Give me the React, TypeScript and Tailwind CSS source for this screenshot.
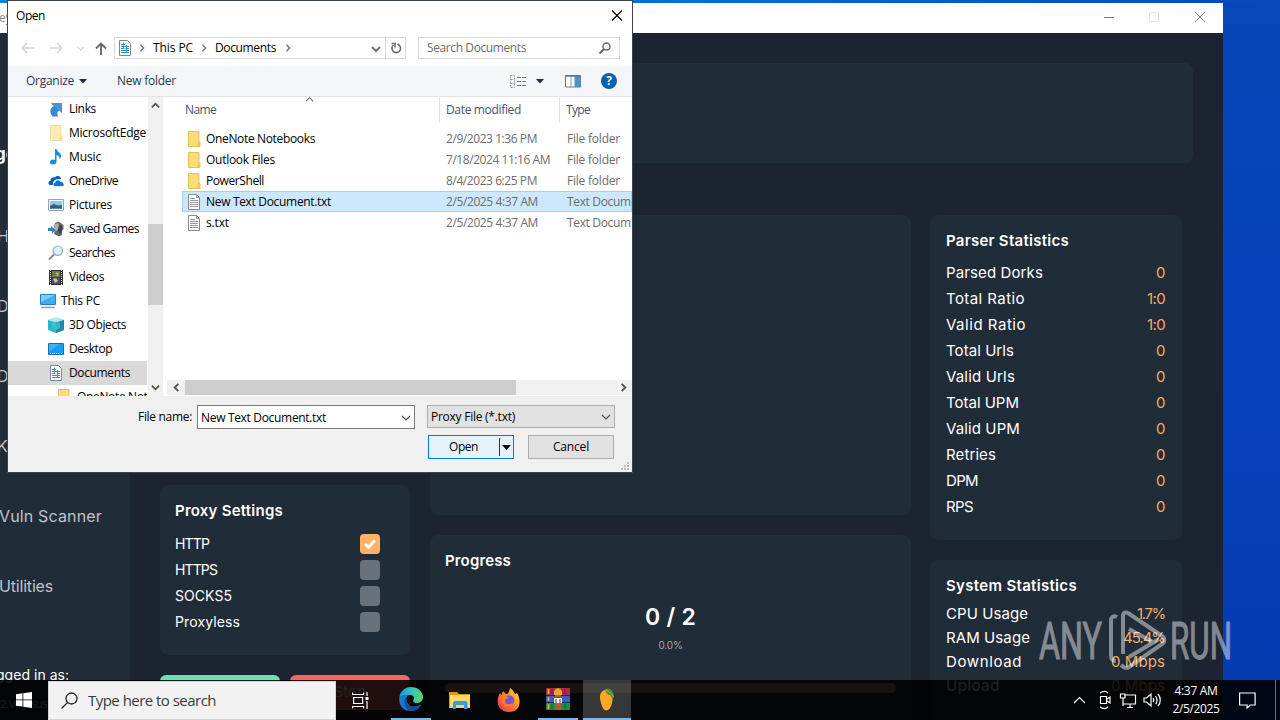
import React from "react";

const POP = "font-[Inter,'Liberation_Sans',sans-serif]";
const UI = "font-['Open_Sans','Noto_Sans',sans-serif]";

type TProps = { w: number; children: string; className?: string };

/* A line of text stretched to an exact advance width. */
function T({ w, children, className = "" }: TProps) {
  const ref = React.useRef<HTMLSpanElement>(null);
  React.useLayoutEffect(() => {
    const el = ref.current;
    if (!el) return;
    el.style.letterSpacing = "0px";
    const natural = el.getBoundingClientRect().width;
    el.style.letterSpacing = (w - natural) / children.length + "px";
  }, [w, children]);
  return (
    <span ref={ref} className={"inline-block shrink-0 whitespace-pre " + className}>
      {children}
    </span>
  );
}

function Folder({ pale = false }: { pale?: boolean }) {
  return (
    <svg width="16" height="18" viewBox="0 0 16 18" className="shrink-0">
      <path d="M2.500 1.500h10.500v10l1 .5v4.500H2.500z" fill={pale ? "#fbecb0" : "#fbdc77"} stroke={pale ? "#f0dfa0" : "#e8c353"} strokeWidth="1" />
      <path d="M12 11.500l2-.5v5.500h-3z" fill={pale ? "#f5e09a" : "#f0c850"} />
    </svg>
  );
}

function TextFile() {
  return (
    <svg width="16" height="18" viewBox="0 0 16 18" className="shrink-0">
      <path d="M2.500 1.500h8l3 3v12h-11z" fill="#fff" stroke="#8a8a8a" />
      <path d="M10.500 1.500v3h3" fill="none" stroke="#8a8a8a" />
      <path d="M4 5.500h5M4 7.500h8M4 9.500h8M4 11.500h8M4 13.500h8" stroke="#9a9a9a" />
    </svg>
  );
}

function DocIcon() {
  return (
    <svg width="16" height="18" viewBox="0 0 16 18" className="shrink-0">
      <path d="M2.500 1.500h8l3 3v12h-11z" fill="#fff" stroke="#7c8790" />
      <path d="M4 5.500h4M4 7.500h8M4 9.500h3.500M8.500 9.500H12M4 11.500h8M4 13.500h8" stroke="#2b8fd0" strokeWidth="1.200" />
      <path d="M6.500 3.500v6M9.500 6v7" stroke="#3f9bd5" />
    </svg>
  );
}

function TreeIcon({ name }: { name: string }) {
  switch (name) {
    case "Links":
      return (
        <svg width="16" height="16" viewBox="0 0 16 16"><path d="M3 2h11v10l-2.500-2.500C9 10.500 9 12 10 15.500H4.500C1 11 2 7 6 5z" fill="#3b86d0" /><path d="M14 2v10L6 5 3 2z" fill="#5aa2e2" opacity=".5" /></svg>
      );
    case "Music":
      return (
        <svg width="16" height="16" viewBox="0 0 16 16"><path d="M7 0h1.500c.3 3 4.500 3.500 4.500 7 0 1.500-.7 2.500-1.500 3.500.5-3-1-3.700-3-4.500v6.500c0 2-1.700 3-3.500 3S2 14.500 2 13.200 3.500 10.500 5 10.500c.8 0 1.500.2 2 .5z" fill="#158ade" /></svg>
      );
    case "OneDrive":
      return (
        <svg width="16" height="16" viewBox="0 0 16 16"><path d="M3 12C0 12-.5 8.500 2.500 7.800 2.500 5 5 3.500 7 4.500 9 1.800 13 3 13 6l-5 .5C5.500 7 5 10 5 12z" fill="#0b5cb8" /><path d="M7 13.500c-2.500-.3-2.500-3.700 0-4 .3-3 4.500-3.500 5.500-1 2-.2 3 1 2.800 2 1.300.7.900 3-.8 3z" fill="#0f74d3" stroke="#fff" strokeWidth=".7" /></svg>
      );
    case "Pictures":
      return (
        <svg width="16" height="16" viewBox="0 0 16 16"><path d="M.5 2.500h15v11H.500z" fill="#f4f8fb" stroke="#9aa4ac" /><path d="M2 4h12v8H2z" fill="#8fc8f2" /><path d="M2 9l4-2 4 1.500 4-.5v4H2z" fill="#375f73" /><path d="M2 11h12v1H2z" fill="#4c8fc5" /></svg>
      );
    case "Saved Games":
      return (
        <svg width="16" height="16" viewBox="0 0 16 16"><path d="M7 2l3-1.500 3 1.500 2.500 2v4L14 10v4l-3 1.500L6 13l1-4-1-4z" fill="#60696e" /><path d="M7 3l3-1 1 4-2 4-3-1z" fill="#a7b4b9" /><path d="M11 4l3 1v4l-2 4-2-3z" fill="#3c4347" /><path d="M0 7h3V5l4.500 4L4 13v-3H0z" fill="#2e83cd" /></svg>
      );
    case "Searches":
      return (
        <svg width="16" height="16" viewBox="0 0 16 16"><path d="M1 14.500L6 9.500" stroke="#8a7f86" strokeWidth="1.800" /><circle cx="9.800" cy="5.700" r="4.700" fill="#dceefa" stroke="#8fa9bd" strokeWidth="1.200" /></svg>
      );
    case "Videos":
      return (
        <svg width="16" height="16" viewBox="0 0 16 16"><path d="M1 1h14v15H1z" fill="#303030" /><path d="M4 2h8v6H4z" fill="#6f7d4e" /><path d="M4 8.500h8V15H4z" fill="#454c9d" /><path d="M8 3l3 2-2 2zM5 10l3-1 2 3-3 2z" fill="#e0c53c" /><path d="M2.500 1v15M13.500 1v15" stroke="#eee" strokeDasharray="1 1" /></svg>
      );
    case "This PC":
      return (
        <svg width="16" height="16" viewBox="0 0 16 16"><path d="M.5 1.500h15v10H.500z" fill="#3aaef2" stroke="#2683c3" /><path d="M1 2h14L1 9z" fill="#7dcdf8" /><path d="M1 14.500h14" stroke="#8c9fae" strokeWidth="1.400" /><path d="M5 13h6" stroke="#c3ccd3" /></svg>
      );
    case "3D Objects":
      return (
        <svg width="16" height="16" viewBox="0 0 16 16"><path d="M0 3l8-2.500L16 3v10l-8 3-8-3z" fill="#27b4cc" /><path d="M0 3l8-2.500L16 3 8 5.500z" fill="#b6edf0" /><path d="M8 5.500L16 3v10l-8 3z" fill="#2387ab" /><path d="M4 6l4-2 4 2v5l-4 2-4-2z" fill="#42c9d8" opacity=".7" /></svg>
      );
    case "Desktop":
      return (
        <svg width="16" height="16" viewBox="0 0 16 16"><path d="M.5 2.500h15v11H.500z" fill="#159cf0" stroke="#1470b5" /><path d="M1 3h11L1 11z" fill="#3cb2f8" /><path d="M2 12.500h9M13 12.500h1" stroke="#b9e2ff" strokeDasharray="1 1" /></svg>
      );
    case "Documents":
      return <DocIcon />;
    default:
      return <Folder pale={name === "MicrosoftEdge"} />;
  }
}

const tree: [string, number, number][] = [
  ["Links", 0, 27], ["MicrosoftEdge", 0, 77], ["Music", 0, 32], ["OneDrive", 0, 49], ["Pictures", 0, 43],
  ["Saved Games", 0, 70], ["Searches", 0, 46], ["Videos", 0, 35], ["This PC", -8, 39], ["3D Objects", 0, 57],
  ["Desktop", 0, 43], ["Documents", 0, 61], ["OneNote Notebooks", 8, 109],
];

const files: [string, number, string, number, string, number][] = [
  ["OneNote Notebooks", 109, "2/9/2023 1:36 PM", 91, "File folder", 53],
  ["Outlook Files", 69, "7/18/2024 11:16 AM", 104, "File folder", 53],
  ["PowerShell", 58, "8/4/2023 6:25 PM", 91, "File folder", 53],
  ["New Text Document.txt", 125, "2/5/2025 4:37 AM", 92, "Text Document", 81],
  ["s.txt", 23, "2/5/2025 4:37 AM", 92, "Text Document", 81],
];

function Chevron({ dir, size = 9, color = "#505050", w = 1.5 }: { dir: "up" | "down" | "left" | "right"; size?: number; color?: string; w?: number }) {
  const d = { up: "M1 7l4-4 4 4", down: "M1 3l4 4 4-4", left: "M7 1L3 5l4 4", right: "M3 1l4 4-4 4" }[dir];
  return <svg width={size} height={size} viewBox="0 0 10 10" className="shrink-0"><path d={d} fill="none" stroke={color} strokeWidth={w} /></svg>;
}

function OpenDialog() {
  return (
    <div className={"absolute left-[8px] top-[1px] flex h-[471px] w-[624px] flex-col overflow-hidden bg-[#f0f0f0] text-[12px] text-black outline outline-[#3c4653] " + UI}>
      <div className="flex h-[29px] shrink-0 items-center justify-between bg-white pl-[8px] pr-[9px] pt-px">
        <T w={29}>Open</T>
        <svg width="12" height="12" viewBox="0 0 12 12"><path d="M1 .5l10 10M11 .5L1 10.500" stroke="#000" strokeWidth="1.100" /></svg>
      </div>
      <div className="flex h-[36px] shrink-0 items-center bg-white pl-[13px]">
        <svg width="13" height="12" viewBox="0 0 13 12" fill="none" stroke="#d4d4d4" strokeWidth="1.400"><path d="M13 6H1M6 1L1 6l5 5" /></svg>
        <svg width="13" height="12" viewBox="0 0 13 12" fill="none" stroke="#d4d4d4" strokeWidth="1.400" className="ml-[16px]"><path d="M0 6h12M7 1l5 5-5 5" /></svg>
        <div className="ml-[14px] flex w-[8px]"><Chevron dir="down" size={7} color="#d0d0d0" /></div>
        <svg width="12" height="13" viewBox="0 0 12 13" fill="none" stroke="#6a6a6a" strokeWidth="1.900" className="ml-[10px]"><path d="M6 13V1.500M1 6.500l5-5 5 5" /></svg>
        <div className="ml-[7px] flex h-[22px] w-[292px] items-center border border-[#d9d9d9] pl-[2px]">
          <DocIcon />
          <div className="ml-[5px] mr-[7px] flex w-[8px] justify-center"><Chevron dir="right" size={8} color="#777" w={1.8} /></div>
          <T w={40}>This PC</T>
          <div className="ml-[7px] mr-[7px] flex w-[8px] justify-center"><Chevron dir="right" size={8} color="#777" w={1.8} /></div>
          <T w={61}>Documents</T>
          <div className="ml-[7px] flex w-[9px] justify-center"><Chevron dir="right" size={8} color="#777" w={1.8} /></div>
          <div className="ml-auto mr-[4px] flex pt-px"><Chevron dir="down" size={10} color="#707070" w={2} /></div>
          <div className="flex h-full w-[20px] items-center justify-center border-l border-[#d9d9d9]">
            <svg width="12" height="12" viewBox="0 0 12 12" fill="none" stroke="#6b6b6b" strokeWidth="1.600"><path d="M3.500 3a4.300 4.300 0 1 0 5.500 0L7.500 2" /><path d="M1.500 1.500H5v4" /></svg>
          </div>
        </div>
        <div className="ml-[12px] flex h-[22px] w-[202px] items-center justify-between border border-[#d9d9d9] pl-[8px] pr-[8px] text-[#6d6d6d]">
          <T w={99}>Search Documents</T>
          <svg width="12" height="12" viewBox="0 0 12 12" fill="none" stroke="#6b6b6b" strokeWidth="1.500"><circle cx="7.500" cy="4.500" r="3.500" /><path d="M5 7L.500 11.500" strokeWidth="2" /></svg>
        </div>
      </div>
      <div className="flex h-[31px] shrink-0 items-center border-b border-[#e2e6ea] bg-[#f5f6f9] pl-[18px] pr-[15px] text-[#1e395b]">
        <T w={48}>Organize</T>
        <svg width="8" height="5" viewBox="0 0 8 5" className="ml-[5px]"><path d="M0 0h8L4 4.500z" fill="#1e2b44" /></svg>
        <div className="ml-[30px] flex"><T w={59}>New folder</T></div>
        <svg width="17" height="13" viewBox="0 0 17 13" className="ml-auto"><path d="M.5.500h4v12h-4zM.500 4.500h4M.500 8.500h4" fill="none" stroke="#9a9a9a" strokeDasharray="2 1" /><path d="M7 2.500h4M7 6.500h4M7 10.500h4M12 2.500h4M12 6.500h4M12 10.500h4" stroke="#777" /></svg>
        <svg width="8" height="5" viewBox="0 0 8 5" className="ml-[9px]"><path d="M0 0h8L4 4.500z" fill="#1e2b44" /></svg>
        <svg width="17" height="13" viewBox="0 0 17 13" className="ml-[21px]"><path d="M.5.500h15v11.500H.500z" fill="#fff" stroke="#6f7b83" /><path d="M6 1v11" stroke="#999" /><path d="M9.500 1h6v11h-6z" fill="#4795d1" /><path d="M.5 1h15" stroke="#67737c" strokeWidth="1.500" /></svg>
        <div className="ml-[19px] flex size-[16px] items-center justify-center rounded-full bg-[#0063b1] text-[12px] font-bold text-white">?</div>
      </div>
      <div className="flex h-[299px] shrink-0 bg-white">
        <div className="flex w-[139px] flex-col overflow-hidden">
          {tree.map(([name, dx, w]) => (
            <div key={name} className={"flex h-[24px] shrink-0 items-center " + (name === "Documents" ? "bg-[#d9d9d9]" : "")}>
              <div className="flex items-center gap-[5px]" style={{ paddingLeft: 40 + dx }}>
                <div className="flex w-[16px] justify-center"><TreeIcon name={name} /></div>
                <T w={w}>{name}</T>
              </div>
            </div>
          ))}
        </div>
        <div className="ml-px flex w-[15px] flex-col items-center bg-[#f0f0f0]">
          <div className="flex h-[17px] items-center"><Chevron dir="up" w={2} /></div>
          <div className="mt-[110px] h-[81px] w-full bg-[#cdcdcd]" />
          <div className="mt-auto flex h-[17px] items-center"><Chevron dir="down" w={2} /></div>
        </div>
        <div className="ml-[4px] flex w-[465px] flex-col">
          <div className="relative flex h-[26px] items-center pl-[18px] text-[#44546f]">
            <div className="absolute left-[138px] top-[-2px]"><Chevron dir="up" w={1.2} color="#666" /></div>
            <div className="w-[254px]"><T w={31}>Name</T></div>
            <div className="flex h-full w-[120px] items-center border-l border-[#e3e3e3] pl-[6px]"><T w={75}>Date modified</T></div>
            <div className="flex h-full items-center border-l border-[#e3e3e3] pl-[6px]"><T w={24}>Type</T></div>
          </div>
          <div className="flex flex-col overflow-hidden pl-[15px] pt-[5px]">
            {files.map(([n, nw, d, dw, t, tw], i) => (
              <div key={n} className={"flex h-[21px] items-center border pl-[3px] " + (i === 3 ? "border-[#99d1ff] bg-[#cce8ff]" : "border-transparent")}>
                {i < 3 ? <Folder /> : <TextFile />}
                <div className="ml-[4px] w-[240px]"><T w={nw}>{n}</T></div>
                <div className="w-[120px] text-[#6d6d6d]"><T w={dw}>{d}</T></div>
                <div className="w-[65px] overflow-hidden pl-px text-[#6d6d6d]"><T w={tw}>{t}</T></div>
              </div>
            ))}
          </div>
          <div className="mb-px mt-auto flex h-[15px] items-center bg-[#f0f0f0]">
            <div className="flex w-[18px] justify-center"><Chevron dir="left" w={2} /></div>
            <div className="h-full w-[331px] bg-[#cdcdcd]" />
            <div className="ml-auto mr-[4px] flex"><Chevron dir="right" w={2} /></div>
          </div>
        </div>
      </div>
      <div className="mt-[8px] flex h-[26px] shrink-0 items-center pl-[130px]">
        <T w={54}>File name:</T>
        <div className="ml-[5px] flex h-[24px] w-[218px] items-center justify-between border border-[#7a7a7a] bg-white pl-[3px] pr-[3px] pt-px"><T w={125}>New Text Document.txt</T><Chevron dir="down" size={10} w={1.2} /></div>
        <div className="mb-px ml-[12px] flex h-[23px] w-[188px] items-center justify-between border border-[#adadad] bg-[#e1e1e1] pl-[3px] pr-[3px] pt-px"><T w={84}>Proxy File (*.txt)</T><Chevron dir="down" size={10} w={1.2} /></div>
      </div>
      <div className="mt-[5px] flex h-[24px] shrink-0 pl-[420px]">
        <div className="flex w-[86px] items-center border border-[#0078d7] bg-[#e5f1fb] pl-[20px]">
          <T w={29}>Open</T>
          <div className="ml-auto flex h-[18px] w-[14px] items-center justify-center border-l border-[#333]"><svg width="9" height="5" viewBox="0 0 9 5"><path d="M0 0h9L4.500 5z" /></svg></div>
        </div>
        <div className="ml-[14px] flex w-[86px] items-center justify-center border border-[#adadad] bg-[#e1e1e1]"><T w={36}>Cancel</T></div>
      </div>
      <svg width="9" height="9" viewBox="0 0 9 9" className="ml-auto mr-[2px] mt-auto mb-px shrink-0" fill="#bdbdbd"><path d="M6 0h2v2H6zM3 3h2v2H3zM6 3h2v2H6zM0 6h2v2H0zM3 6h2v2H3zM6 6h2v2H6z" /></svg>
    </div>
  );
}

const parser: [string, number, string, number][] = [
  ["Parsed Dorks", 97, "0", 9], ["Total Ratio", 79, "1:0", 18], ["Valid Ratio", 80, "1:0", 18], ["Total Urls", 68, "0", 9],
  ["Valid Urls", 69, "0", 9], ["Total UPM", 73, "0", 9], ["Valid UPM", 74, "0", 9], ["Retries", 50, "0", 9], ["DPM", 32, "0", 9], ["RPS", 27, "0", 9],
];
const system: [string, number, string, number][] = [
  ["CPU Usage", 82, "1.7%", 28], ["RAM Usage", 84, "45.4%", 42], ["Download", 76, "0 Mbps", 54], ["Upload", 54, "0 Mbps", 54],
];
const proxies: [string, number, boolean][] = [["HTTP", 34, true], ["HTTPS", 42, false], ["SOCKS5", 57, false], ["Proxyless", 65, false]];

function Sidebar() {
  return (
    <div className="w-[130px] shrink-0 overflow-hidden bg-[#212c39] text-[16px] text-[#bfc3c8]">
      <div className="flex flex-col">
        <div className="h-[168px] pt-[109px] text-[17px] font-bold text-white"><span className="-ml-[5px]">go</span></div>
        {["H", "D", "D", "K"].map((c, i) => (
          <div key={i} className="flex h-[70px] items-center"><span className="-ml-[3px]">{c}</span></div>
        ))}
        <div className="flex h-[70px] items-center"><T w={103} className="-ml-px">Vuln Scanner</T></div>
        <div className="flex h-[70px] items-center"><T w={54} className="-ml-px">Utilities</T></div>
        <div className="mt-[43px] text-[14px] text-white"><T w={73} className="-ml-[4px]">gged in as:</T></div>
        <div className="mt-[11px] text-[11px]"><T w={47}>2.Vegasus</T></div>
      </div>
    </div>
  );
}

function AppWindow() {
  return (
    <div className={"absolute left-0 top-[3px] flex h-[717px] w-[1223px] flex-col bg-[#1c2431] text-white " + POP}>
      <div className="flex h-[30px] shrink-0 items-center bg-white pr-[17px]">
        <span className={"-ml-px text-[12px] text-[#888] " + UI}>ey</span>
        <svg width="102" height="12" viewBox="0 0 102 12" className="ml-auto mb-[2px]" fill="none"><path d="M0 6.500h10" stroke="#777" /><path d="M45.500 1.500h9v9h-9z" stroke="#e4e4e4" /><path d="M91 1l10 10M101 1L91 11" stroke="#888" /></svg>
      </div>
      <div className="flex min-h-0 flex-1">
        <Sidebar />
        <div className="flex flex-1 flex-col overflow-hidden pl-[30px] pt-[30px]">
          <div className="h-[100px] w-[1033px] shrink-0 rounded-[8px] bg-[#212c39]" />
          <div className="mt-[52px] flex">
            <div className="w-[250px]">
              <div className="h-[250px] rounded-[8px] bg-[#212c39]" />
              <div className="mt-[20px] h-[170px] rounded-[8px] bg-[#212c39] px-[15px] pt-[16px]">
                <div className="flex h-[20px] items-center text-[15px] font-semibold"><T w={108}>Proxy Settings</T></div>
                <div className="mt-[10px] text-[14px]">
                  {proxies.map(([n, w, on]) => (
                    <div key={n} className="flex h-[26px] items-center justify-between pr-[15px]">
                      <T w={w} className="-mt-px">{n}</T>
                      <div className={"flex size-[20px] items-center justify-center rounded-[4px] " + (on ? "bg-[#ffb266]" : "bg-[#687079]")}>
                        {on && <svg width="12" height="10" viewBox="0 0 12 10" fill="none"><path d="M1 5l3.500 3.300L11 1.500" stroke="#fff" strokeWidth="2.900" /></svg>}
                      </div>
                    </div>
                  ))}
                </div>
              </div>
              <div className="mt-[20px] flex gap-[10px] text-[15px]">
                <div className="h-[35px] flex-1 rounded-[6px] bg-[#66e3b0]" />
                <div className="flex h-[35px] flex-1 items-center justify-center rounded-[6px] bg-[#f76464]">Stop</div>
              </div>
            </div>
            <div className="ml-[20px] w-[481px]">
              <div className="h-[300px] rounded-[8px] bg-[#212c39]" />
              <div className="mt-[20px] flex h-[200px] flex-col rounded-[8px] bg-[#212c39] px-[15px] pt-[16px]">
                <div className="flex h-[20px] items-center text-[15px] font-semibold"><T w={66}>Progress</T></div>
                <div className="mt-[31px] flex h-[30px] items-center justify-center text-[23px] font-semibold"><T w={51}>0 / 2</T></div>
                <div className="mt-[5px] flex h-[16px] items-center justify-center text-[10px] text-[#a2a8af]"><T w={24}>0.0%</T></div>
                <div className="mt-[30px] h-[10px] rounded-[5px] bg-[#a8947c]" />
              </div>
            </div>
            <div className="ml-[19px] w-[252px]">
              <div className="h-[325px] rounded-[8px] bg-[#212c39] pl-[16px] pr-[17px] pt-[16px]">
                <div className="flex h-[20px] items-center text-[15px] font-semibold"><T w={123}>Parser Statistics</T></div>
                <div className="mt-[9px] text-[15px]">
                  {parser.map(([n, w, v, vw]) => (
                    <div key={n} className="flex h-[26px] items-center justify-between"><T w={w}>{n}</T><T w={vw} className="text-[#f5ab62]">{v}</T></div>
                  ))}
                </div>
              </div>
              <div className="mt-[20px] h-[170px] rounded-[8px] bg-[#212c39] pl-[16px] pr-[17px] pt-[16px]">
                <div className="flex h-[20px] items-center text-[15px] font-semibold"><T w={131}>System Statistics</T></div>
                <div className="mt-[6px] text-[15px]">
                  {system.map(([n, w, v, vw]) => (
                    <div key={n} className="flex h-[24px] items-center justify-between"><T w={w}>{n}</T><T w={vw} className="text-[#f5ab62]">{v}</T></div>
                  ))}
                </div>
              </div>
            </div>
          </div>
        </div>
      </div>
    </div>
  );
}

function Watermark() {
  return (
    <div className="absolute left-[1039px] top-[608px] flex h-[64px] items-center text-white opacity-45">
      <svg width="194" height="64" viewBox="0 0 194 64" fill="none" stroke="currentColor">
        <g fill="currentColor" strokeWidth="1" fontFamily="Roboto, sans-serif" fontSize="51">
          <text x="0" y="51" textLength="126" lengthAdjust="spacingAndGlyphs" transform="scale(.5 1)">ANY</text>
          <text x="262" y="51" textLength="124" lengthAdjust="spacingAndGlyphs" transform="scale(.5 1)">RUN</text>
        </g>
        <g strokeWidth="4" strokeLinejoin="round">
          <path d="M78 9c-4-2-6 0-6 4v34c0 4 2 6 5 6" />
          <path d="M84 46V8c0-4 3-4 5-3l34 23c3 2 3 6 0 8L90 59c-3 2-5 1-8-2" />
          <path d="M90 21l24 13M90 49l30-18" />
        </g>
      </svg>
    </div>
  );
}

function Taskbar() {
  const slot = "flex h-full w-[49px] items-center justify-center";
  return (
    <div className={"absolute bottom-0 left-0 flex h-[40px] w-full items-center bg-black/87 text-white " + UI}>
      <div className="flex w-[48px] justify-center"><svg width="16" height="16" viewBox="0 0 16 16" fill="#fff"><path d="M0 2.300l6.500-1v6.200H0zM7.300 1.200L16 0v7.500H7.300zM0 8.300h6.500v6.300L0 13.700zM7.300 8.300H16V16l-8.700-1.200z" /></svg></div>
      <div className="flex h-[39px] w-[288px] items-center self-end border border-[#d5d5d5] bg-[#f2f2f2] pl-[12px] text-[15px] text-[#3a3a3a]">
        <svg width="17" height="17" viewBox="0 0 17 17" fill="none" stroke="#222" strokeWidth="1.300"><circle cx="10.500" cy="6.500" r="5.500" /><path d="M6.500 10.500L.500 16.500" /></svg>
        <div className="ml-[10px] flex"><T w={128}>Type here to search</T></div>
      </div>
      <div className={slot}><svg width="17" height="17" viewBox="0 0 17 17" fill="none" stroke="#fff" strokeWidth="1.200"><path d="M.6.500v2h11v-2M1.600 5.500h9v6h-9zM.600 16.500v-2h11v2M15 0v4M15 9v8" /><path d="M15 5v3" strokeWidth="3" /></svg></div>
      <div className="ml-[6px] flex h-full w-[40px] items-center justify-center border-b-2 border-[#76b9ed]">
        <svg width="24" height="24" viewBox="0 0 24 24">
          <defs><linearGradient id="eg" x1="0" x2="1"><stop stopColor="#1697d8" /><stop offset=".6" stopColor="#35c8bd" /><stop offset="1" stopColor="#66d64e" /></linearGradient></defs>
          <path d="M.300 11C1 4 6 0 12 0c7 0 12 5 12 10 0 4-3 6-6.500 6-3 0-4-1.500-3-3 1.500-2 0-5-3.500-5C6 8 2 9 .300 11z" fill="url(#eg)" />
          <path d="M.2 11C2 8.500 6 7 9.500 8 5 11 8 19 14 19.500c3 .3 6-.5 8.500-2.500C20 22 16 24 12 24 4 24-.500 18 .200 11z" fill="#1678cf" />
          <path d="M9.500 8C5 11 7 18 13 19.500c3 .7 7-.5 9-2.500-2 5-6 7-10 7C5 23 3 12 9.500 8z" fill="#124f9c" />
        </svg>
      </div>
      <div className={slot + " ml-[4px]"}><svg width="22" height="20" viewBox="0 0 22 20"><path d="M0 2h8l2 2h11v14H0z" fill="#d99a16" /><path d="M1 5h20v13H1z" fill="#ffd86b" /><path d="M5 11h12l1.500 1.500V19H15v-4H7v4H4v-6z" fill="#3e9bd8" /></svg></div>
      <div className={slot}><svg width="24" height="24" viewBox="0 0 24 24"><defs><linearGradient id="fg" x1="1" x2="0" y2="1"><stop stopColor="#ffe342" /><stop offset=".5" stopColor="#ff8122" /><stop offset="1" stopColor="#f0256c" /></linearGradient></defs><path d="M3 5l1.500 2L6 3l3 3c2 0 3-1 4-6 3 2 4 4 5 6l2-1c5 8 3 19-8 19C1 24-2 13 3 5z" fill="url(#fg)" /><circle cx="12" cy="12.500" r="5.300" fill="#7954c8" /><path d="M5 8c3-1 5 0 7 2-3 0-4 1-4 3.500 0 3 5 4 8 1-1 5-9 6-11 0z" fill="#ff7a2b" /></svg></div>
      <div className="ml-[5px] flex h-full w-[40px] items-center justify-center border-b-2 border-[#76b9ed]">
        <svg width="24" height="22" viewBox="0 0 24 22">
          <path d="M0 0h24v7H0z" fill="#b4274c" /><path d="M0 7h24v1H0z" fill="#5e1530" />
          <path d="M0 8h24v6H0z" fill="#3b5fb4" /><path d="M0 14h24v1H0z" fill="#1c2f60" />
          <path d="M0 15h24v7H0z" fill="#28854a" />
          <path d="M2.500 1v5M2.500 9v4M2.500 16v5" stroke="#e5b43d" strokeWidth="1.600" />
          <path d="M6 1v5M19 1v5M6 16v5M19 16v5" stroke="#000" strokeOpacity=".3" />
          <path d="M9 0h6v22H9z" fill="#b0602c" /><path d="M8 3l4-3 4 3v4H8z" fill="#f0a62c" />
          <path d="M8 10h8v5H8z" fill="#f2ede4" /><path d="M10 11v4M14 11v4" stroke="#444" /><path d="M9 9.500h6" stroke="#555" />
        </svg>
      </div>
      <div className="ml-[5px] flex h-full w-[48px] items-center justify-center border-b-2 border-[#76b9ed] bg-white/20">
        <svg width="16" height="23" viewBox="0 0 16 23"><path d="M6 2C1.500 3 0 8 1.500 13c1 4 2.500 9.500 5.500 9.500s5-3 6-7.500C14.500 9 13 4 11 2.500 9.500 1.500 8 1.500 6 2z" fill="#ffa726" /><path d="M6 1c4-2 9.500 2 9 9-2 .5-3-1-3.500-2.500C9 7 6.500 4.500 6 1z" fill="#558b2f" /><path d="M7 2c3 1 6 4 7.500 7" stroke="#a9c46c" fill="none" strokeWidth=".8" /></svg>
      </div>
      <svg width="90" height="20" viewBox="0 0 90 20" fill="none" stroke="#fff" strokeWidth="1.200" className="ml-auto mr-[9px]">
        <path d="M1 13l5.500-5.500L12 13" />
        <path d="M27.500 6.500h6v7h-6zM34 9l3-2v6l-3-2M27 3c3-2 6-2 8 0M27 17c3 2 6 2 8 0" />
        <path d="M52 5h10.500v9H50M54 17.500h6M57 14v3M47.500 4h4.500v4h-4.500zM50 8v8" />
        <path d="M71 8h2.500L78 4v12l-4.500-4H71zM80 8c1 1.500 1 3 0 4M82.500 6c2 2.500 2 6 0 8M85 4c3 3.500 3 9 0 12" />
      </svg>
      <div className="flex w-[48px] flex-col items-center text-[12px] leading-[18px]"><T w={43}>4:37 AM</T><T w={47}>2/5/2025</T></div>
      <svg width="17" height="17" viewBox="0 0 17 17" fill="none" stroke="#fff" strokeWidth="1.200" className="ml-[19px] mr-[19px]"><path d="M.6 1h15.500v12h-5l-3 3v-3H.600z" /></svg>
      <div className="h-full w-[5px] border-l border-[#696e78]" />
    </div>
  );
}

export default function App() {
  return (
    <div className="flex h-[720px] w-[1280px] flex-col overflow-hidden bg-gradient-to-b from-[#0847b8] via-[#0440bc] to-[#063bb0]">
      <div className="h-[3px] w-full bg-gradient-to-r from-[#0a84e0] via-[#0a6fd0] to-[#0847b8]" />
      <AppWindow />
      <Watermark />
      <OpenDialog />
      <Taskbar />
    </div>
  );
}
